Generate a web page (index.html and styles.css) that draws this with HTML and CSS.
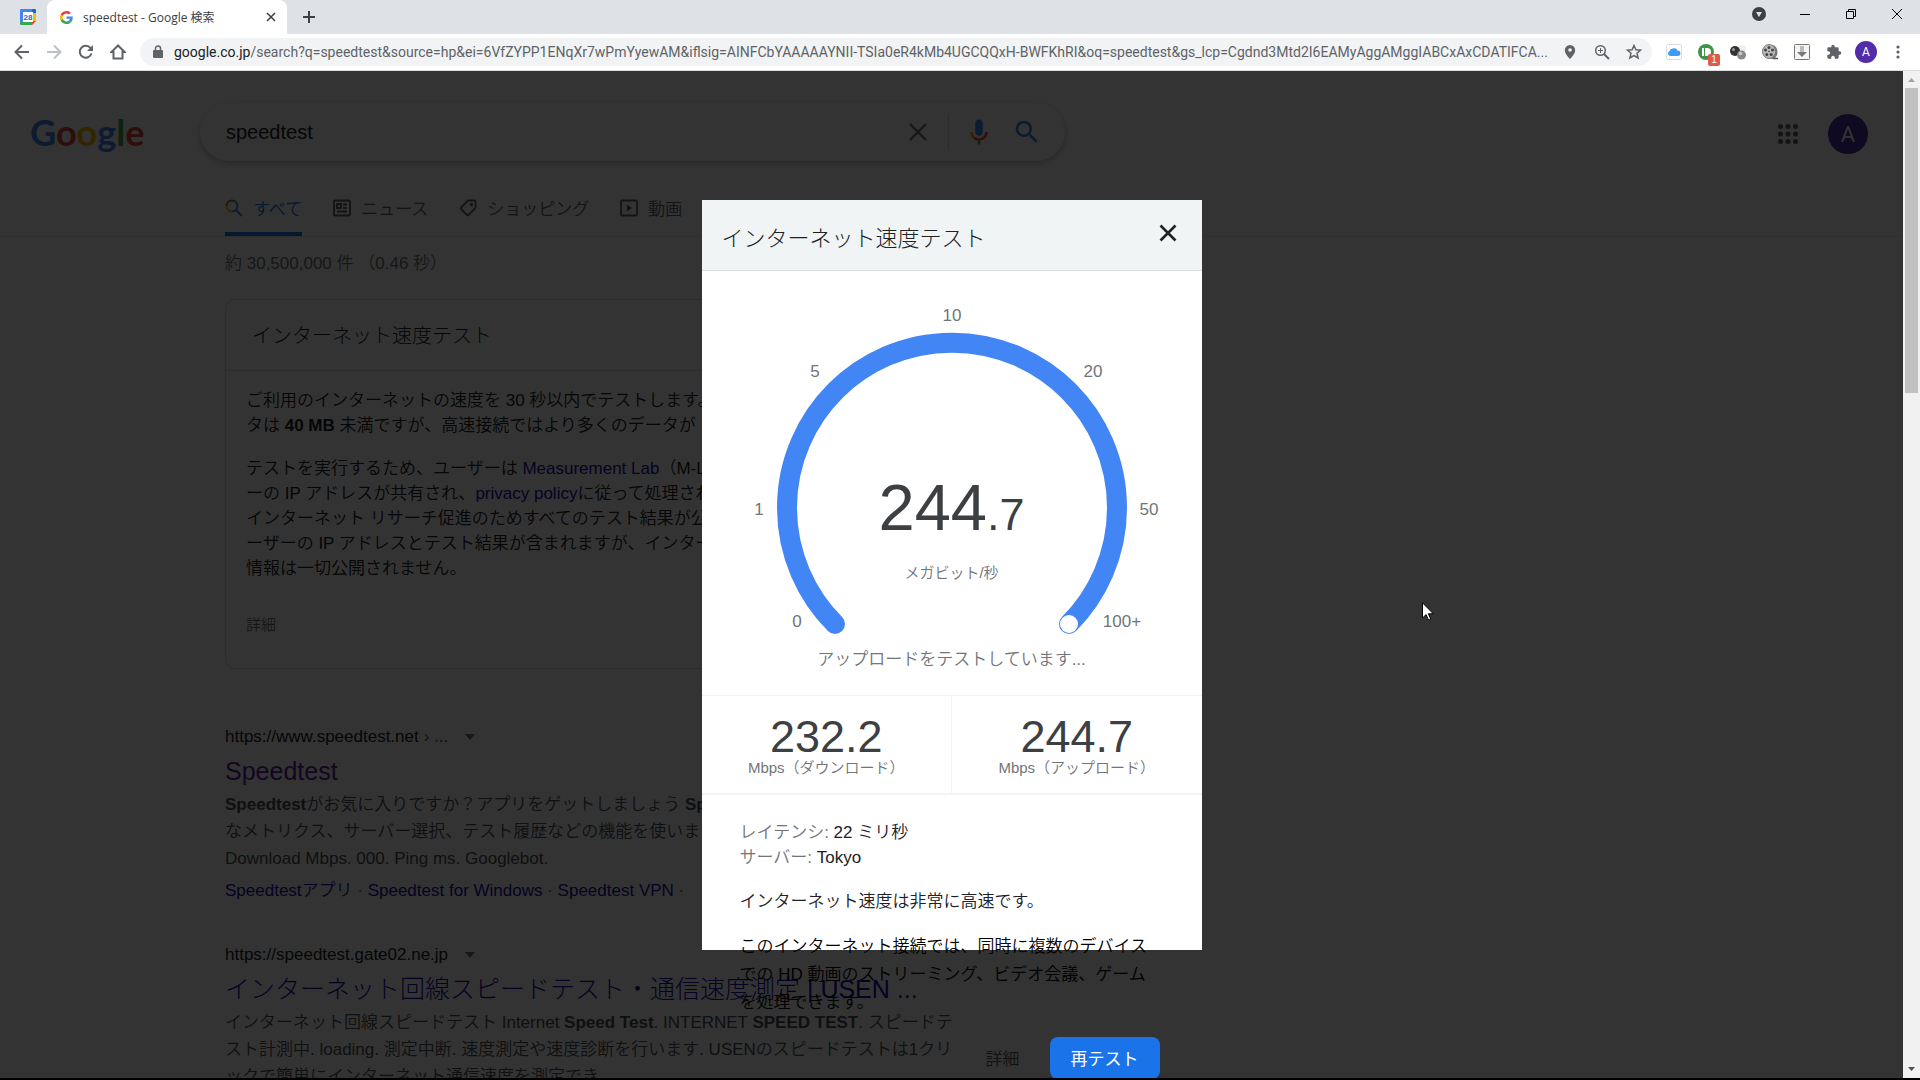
FILE: index.html
```html
<!DOCTYPE html>
<html lang="ja">
<head>
  <meta charset="UTF-8" />
  <meta name="viewport" content="width=device-width, initial-scale=1.0" />
  <title>speedtest - Google 検索</title>
  <link rel="stylesheet" href="styles.css">
</head>
<body>
  <div class="tabstrip">
    <button class="pinned-tab" aria-label="カレンダー">
      <svg width="16" height="16" viewBox="0 0 16 16">
        <path d="M0 1a1 1 0 0 1 1-1h11v4H4v8H0z" fill="#4285f4"/>
        <path d="M12 0h3a1 1 0 0 1 1 1v3h-4z" fill="#1967d2"/>
        <path d="M12 4h4v8h-4z" fill="#fbbc04"/>
        <path d="M0 12h12v4H1a1 1 0 0 1-1-1z" fill="#34a853"/>
        <path d="M12 12h4l-4 4z" fill="#ea4335"/>
        <path d="M3 3h10v10H3z" fill="#fff"/>
        <text x="8" y="11" text-anchor="middle" class="cal-day">28</text>
      </svg>
    </button>
    <div class="tab">
      <svg width="13" height="13" viewBox="0 0 48 48">
        <path fill="#ea4335" d="M24 9.500c3.500 0 6.700 1.200 9.200 3.600l6.900-6.900C35.900 2.400 30.500 0 24 0 14.600 0 6.500 5.400 2.600 13.200l8 6.200C12.400 13.700 17.700 9.500 24 9.500z"/>
        <path fill="#4285f4" d="M47 24.600c0-1.600-.2-3.100-.4-4.600H24v9h12.900c-.6 3-2.200 5.500-4.700 7.200l7.700 6C44.400 38 47 31.800 47 24.600z"/>
        <path fill="#fbbc05" d="M10.500 28.600a14.500 14.500 0 0 1 0-9.200l-8-6.200a24 24 0 0 0 0 21.600z"/>
        <path fill="#34a853" d="M24 48c6.500 0 11.900-2.100 15.900-5.800l-7.700-6c-2.200 1.500-4.900 2.300-8.200 2.300-6.300 0-11.600-4.200-13.500-9.900l-8 6.200C6.500 42.600 14.600 48 24 48z"/>
      </svg>
      <span class="tab-title">speedtest - Google 検索</span>
      <button aria-label="タブを閉じる">
        <svg width="10" height="10" viewBox="0 0 10 10"><path d="M1 1l8 8M9 1l-8 8" stroke="#3c4043" stroke-width="1.500"/></svg>
      </button>
    </div>
    <button class="new-tab" aria-label="新しいタブ">
      <svg width="12" height="12" viewBox="0 0 12 12"><path d="M6 0v12M0 6h12" stroke="#3c4043" stroke-width="2"/></svg>
    </button>
    <div class="window-buttons">
      <button aria-label="タブを検索">
        <svg width="14" height="14" viewBox="0 0 14 14"><circle cx="7" cy="7" r="7" fill="#3c4043"/><path d="M4 5h6L7 10z" fill="#dee1e6"/></svg>
      </button>
      <button aria-label="最小化">
        <svg width="10" height="10" viewBox="0 0 10 10"><path d="M0 5.500h10" stroke="#000"/></svg>
      </button>
      <button aria-label="元に戻す">
        <svg width="10" height="10" viewBox="0 0 10 10"><path d="M.5 2.500h7v7h-7zM2.500 2.500v-2h7v7h-2" fill="none" stroke="#000"/></svg>
      </button>
      <button aria-label="閉じる">
        <svg width="10" height="10" viewBox="0 0 10 10"><path d="M0 0l10 10M10 0L0 10" stroke="#000"/></svg>
      </button>
    </div>
  </div>

  <div class="toolbar">
    <div class="nav-buttons">
      <button aria-label="戻る">
        <svg width="16" height="16" viewBox="0 0 16 16"><path d="M15 8H2M8 1.500L1.500 8 8 14.500" fill="none" stroke="#5f6368" stroke-width="2"/></svg>
      </button>
      <button aria-label="進む">
        <svg width="16" height="16" viewBox="0 0 16 16"><path d="M1 8h13M8 1.500L14.500 8 8 14.500" fill="none" stroke="#bdc1c6" stroke-width="2"/></svg>
      </button>
      <button aria-label="再読み込み">
        <svg width="16" height="16" viewBox="0 0 16 16"><path d="M13.500 9.500A6 6 0 1 1 12.500 4" fill="none" stroke="#5f6368" stroke-width="2"/><path d="M15 1v6H9z" fill="#5f6368"/></svg>
      </button>
      <button aria-label="ホーム">
        <svg width="16" height="16" viewBox="0 0 16 16"><path d="M8 1.500L1.500 8H3.500v6.500h9V8h2z" fill="none" stroke="#5f6368" stroke-width="2"/></svg>
      </button>
    </div>
    <div class="omnibox">
      <svg width="10" height="14" viewBox="0 0 10 14"><rect y="5" width="10" height="8" rx="1" fill="#5f6368"/><path d="M2.500 6V3.500a2.500 2.500 0 0 1 5 0V6" fill="none" stroke="#5f6368" stroke-width="1.500"/></svg>
      <div class="url">
        <label for="url">google.co.jp</label><input id="url" type="text" value="/search?q=speedtest&amp;source=hp&amp;ei=6VfZYPP1ENqXr7wPmYyewAM&amp;iflsig=AINFCbYAAAAAYNII-TSIa0eR4kMb4UGCQQxH-BWFKhRI&amp;oq=speedtest&amp;gs_lcp=Cgdnd3Mtd2I6EAMyAggAMggIABCxAxCDATIFCA...">
      </div>
      <div class="omnibox-actions">
        <button aria-label="位置情報">
          <svg width="16" height="16" viewBox="0 0 16 16"><path d="M8 1a5.200 5.200 0 0 0-5.200 5.200C2.800 10 8 15 8 15s5.200-5 5.200-8.800A5.200 5.200 0 0 0 8 1z" fill="#5f6368"/><circle cx="8" cy="6" r="1.800" fill="#f1f3f4"/></svg>
        </button>
        <button aria-label="ズーム">
          <svg width="16" height="16" viewBox="0 0 16 16"><circle cx="6.500" cy="6.500" r="4.800" fill="none" stroke="#5f6368" stroke-width="1.500"/><path d="M10 10l5 5" stroke="#5f6368" stroke-width="2"/><path d="M6.500 4v5M4 6.500h5" stroke="#5f6368"/></svg>
        </button>
        <button aria-label="ブックマーク">
          <svg width="16" height="16" viewBox="0 0 16 16"><path d="M8 1.500l1.900 4.300 4.600.4-3.500 3.100 1.100 4.700L8 11.600 3.900 14 5 9.300 1.500 6.200l4.600-.4z" fill="none" stroke="#5f6368" stroke-width="1.500"/></svg>
        </button>
      </div>
    </div>
    <div class="extensions">
      <button aria-label="iCloud">
        <svg width="16" height="16" viewBox="0 0 16 16"><rect x=".5" y=".5" width="15" height="15" rx="2" fill="#fff" stroke="#dadce0"/><path d="M4 12a2.600 2.600 0 0 1-.3-5A3 3 0 0 1 6.800 4.500 3.300 3.300 0 0 1 11.400 6.600 2.700 2.700 0 0 1 12 12z" fill="#3b9cf2"/></svg>
      </button>
      <button class="has-badge" aria-label="Pushbullet">
        <svg width="16" height="16" viewBox="0 0 16 16"><circle cx="8" cy="8" r="8" fill="#3f9449"/><path d="M4 4h2v8H4zM7 4h2a4 4 0 0 1 0 8H7z" fill="#fff"/></svg>
        <span class="badge">1</span>
      </button>
      <button aria-label="拡張機能">
        <svg width="16" height="16" viewBox="0 0 16 16">
          <circle cx="12" cy="5" r="4" fill="#eee"/><circle cx="5" cy="7" r="5" fill="#333"/><circle cx="11.500" cy="11" r="4.500" fill="#8a8a8a"/><circle cx="3.500" cy="5.500" r="1.500" fill="#999"/><circle cx="10.500" cy="9.500" r="1.800" fill="#ccc"/>
        </svg>
      </button>
      <button aria-label="拡張機能">
        <svg width="16" height="16" viewBox="0 0 16 16">
          <ellipse cx="10" cy="8" rx="5.500" ry="7" fill="#777"/><ellipse cx="7" cy="7.500" rx="6.500" ry="7" fill="#bbb" stroke="#777"/>
          <g fill="#444"><circle cx="7" cy="3.500" r="1.500"/><circle cx="3.500" cy="6" r="1.500"/><circle cx="10.500" cy="6" r="1.500"/><circle cx="4.800" cy="10.500" r="1.500"/><circle cx="9.200" cy="10.500" r="1.500"/><circle cx="7" cy="7.500" r=".8"/></g>
          <path d="M11 14.500h5" stroke="#555" stroke-width="1.500"/>
        </svg>
      </button>
      <button aria-label="ダウンロード">
        <svg width="16" height="16" viewBox="0 0 16 16"><rect x=".5" y=".5" width="15" height="15" rx="1" fill="#f4f4f4" stroke="#777"/><path d="M6 2h4v6H6z" fill="#bbb"/><path d="M3 8h10l-5 5z" fill="#777"/></svg>
      </button>
      <button aria-label="拡張機能の管理">
        <svg width="16" height="16" viewBox="0 0 24 24"><path d="M20.500 11H19V7a2 2 0 0 0-2-2h-4V3.500a2.500 2.500 0 0 0-5 0V5H4a2 2 0 0 0-2 2v3.800h1.500a2.700 2.700 0 0 1 0 5.400H2V20a2 2 0 0 0 2 2h3.800v-1.500a2.700 2.700 0 0 1 5.400 0V22H17a2 2 0 0 0 2-2v-4h1.500a2.500 2.500 0 0 0 0-5z" fill="#5f6368"/></svg>
      </button>
      <button class="profile" aria-label="プロフィール">A</button>
      <button aria-label="メニュー">
        <svg width="16" height="16" viewBox="0 0 16 16" fill="#5f6368"><circle cx="8" cy="3" r="1.600"/><circle cx="8" cy="8" r="1.600"/><circle cx="8" cy="13" r="1.600"/></svg>
      </button>
    </div>
  </div>

  <div class="viewport">
    <div class="page">
      <header class="header">
        <a class="logo" href="#" aria-label="Google"><span class="blue">G</span><span class="red">o</span><span class="yellow">o</span><span class="blue">g</span><span class="green">l</span><span class="red">e</span></a>
        <form class="search">
          <input type="text" value="speedtest" aria-label="検索">
          <button type="button" aria-label="クリア">
            <svg width="24" height="24" viewBox="0 0 24 24"><path d="M4 4l16 16M20 4L4 20" stroke="#70757a" stroke-width="2.400"/></svg>
          </button>
          <span class="separator"></span>
          <button type="button" aria-label="音声で検索">
            <svg width="30" height="30" viewBox="0 0 24 24">
              <path fill="#4285f4" d="M12 15c1.700 0 3-1.300 3-3V5c0-1.700-1.300-3-3-3S9 3.300 9 5v7c0 1.700 1.300 3 3 3z"/>
              <path fill="#34a853" d="M11 18.900h2V22h-2z"/>
              <path fill="#f4b400" d="M7 12H5c0 1.900.8 3.700 2 4.900l1.400-1.400A4.900 4.900 0 0 1 7 12z"/>
              <path fill="#ea4335" d="M12 16.900c-1.400 0-2.600-.5-3.500-1.400L7.100 16.900A6.900 6.900 0 0 0 12 19c3.900 0 7-3.100 7-7h-2c0 2.800-2.200 4.900-5 4.900z"/>
            </svg>
          </button>
          <button type="submit" aria-label="Google 検索">
            <svg width="30" height="30" viewBox="0 0 24 24"><path fill="#4285f4" d="M15.500 14h-.8l-.3-.3A6.500 6.500 0 1 0 13.700 14.400l.3.300v.8l5 5 1.500-1.500zM9.500 14a4.500 4.500 0 1 1 0-9 4.500 4.500 0 0 1 0 9z"/></svg>
          </button>
        </form>
        <div class="account">
          <button aria-label="Google アプリ">
            <svg width="20" height="20" viewBox="0 0 20 20" fill="#5f6368"><circle cx="2.500" cy="2.500" r="2.500"/><circle cx="10" cy="2.500" r="2.500"/><circle cx="17.500" cy="2.500" r="2.500"/><circle cx="2.500" cy="10" r="2.500"/><circle cx="10" cy="10" r="2.500"/><circle cx="17.500" cy="10" r="2.500"/><circle cx="2.500" cy="17.500" r="2.500"/><circle cx="10" cy="17.500" r="2.500"/><circle cx="17.500" cy="17.500" r="2.500"/></svg>
          </button>
          <button class="avatar" aria-label="Google アカウント">A</button>
        </div>
      </header>

      <nav class="modes">
        <a class="active" href="#">
          <svg width="18" height="18" viewBox="0 0 18 18" fill="none" stroke-width="2">
            <path d="M1.500 7A5.500 5.500 0 0 1 7 1.500" stroke="#ea4335"/><path d="M7 1.500A5.500 5.500 0 0 1 12.500 7" stroke="#34a853"/><path d="M1.500 7A5.500 5.500 0 0 0 7 12.500" stroke="#fbbc04"/><path d="M12.500 7A5.500 5.500 0 0 1 7 12.500M11 11l6 6" stroke="#4285f4"/>
          </svg>
          すべて
        </a>
        <a href="#">
          <svg width="18" height="18" viewBox="0 0 18 18" fill="none" stroke="#5f6368" stroke-width="1.800"><rect x="1" y="1.500" width="16" height="15" rx="1"/><path d="M4 5h4v4H4zM10 5.500h4M10 9h4M4 12.500h10"/></svg>
          ニュース
        </a>
        <a href="#">
          <svg width="18" height="18" viewBox="0 0 18 18" fill="none" stroke="#5f6368" stroke-width="1.800"><path d="M9 1.500h6.500a1 1 0 0 1 1 1V9L9.500 16a1 1 0 0 1-1.400 0L2 10a1 1 0 0 1 0-1.500z"/><circle cx="12.500" cy="5.500" r=".8"/></svg>
          ショッピング
        </a>
        <a href="#">
          <svg width="18" height="18" viewBox="0 0 18 18"><rect x="1" y="1.500" width="16" height="15" rx="1" fill="none" stroke="#5f6368" stroke-width="1.800"/><path d="M7 5.500l5 3.500-5 3.500z" fill="#5f6368"/></svg>
          動画
        </a>
      </nav>

      <main class="results">
        <p class="stats">約 30,500,000 件 （0.46 秒）</p>

        <section class="card">
          <h2>インターネット速度テスト</h2>
          <div class="card-body">
            <p>ご利用のインターネットの速度を 30 秒以内でテストします。<br>タは <b>40 MB</b> 未満ですが、高速接続ではより多くのデータが</p>
            <p>テストを実行するため、ユーザーは <a href="#">Measurement Lab</a>（M-Lab）<br>ーの IP アドレスが共有され、<a href="#">privacy policy</a>に従って処理され<br>インターネット リサーチ促進のためすべてのテスト結果が公<br>ーザーの IP アドレスとテスト結果が含まれますが、インター<br>情報は一切公開されません。</p>
            <a class="more" href="#">詳細</a>
          </div>
        </section>

        <article class="result">
          <p class="cite">https://www.speedtest.net <span>› ...</span><i class="caret"></i></p>
          <h3><a class="visited" href="#">Speedtest</a></h3>
          <p class="snippet"><b>Speedtest</b>がお気に入りですか？アプリをゲットしましょう <b>Speedtest</b><br>なメトリクス、サーバー選択、テスト履歴などの機能を使います。<br>Download Mbps. 000. Ping ms. Googlebot.</p>
          <p class="sitelinks"><a href="#">Speedtestアプリ</a> · <a href="#">Speedtest for Windows</a> · <a href="#">Speedtest VPN</a> ·</p>
        </article>

        <article class="result">
          <p class="cite">https://speedtest.gate02.ne.jp<i class="caret"></i></p>
          <h3><a href="#">インターネット回線スピードテスト・通信速度測定 | USEN ...</a></h3>
          <p class="snippet">インターネット回線スピードテスト Internet <b>Speed Test</b>. INTERNET <b>SPEED TEST</b>. スピードテ<br>スト計測中. loading. 測定中断. 速度測定や速度診断を行います. USENのスピードテストは1クリ<br>ックで簡単にインターネット通信速度を測定でき</p>
        </article>
      </main>

      <div class="overlay">
        <div class="dialog" role="dialog" aria-labelledby="dialog-title">
          <div class="dialog-header">
            <h2 id="dialog-title">インターネット速度テスト</h2>
            <button aria-label="閉じる">
              <svg width="18" height="18" viewBox="0 0 18 18"><path d="M1.500 1.500l15 15M16.500 1.500l-15 15" stroke="#202124" stroke-width="2.600"/></svg>
            </button>
          </div>

          <div class="gauge">
            <svg width="500" height="364" viewBox="0 0 500 364">
              <path d="M133 353A165 165 0 1 1 367 353" fill="none" stroke="#4285f4" stroke-width="20" stroke-linecap="round"/>
              <circle cx="367" cy="353" r="9" fill="#fff"/>
              <g class="ticks">
                <text x="95" y="356">0</text>
                <text x="57" y="244">1</text>
                <text x="113" y="106">5</text>
                <text x="250" y="50">10</text>
                <text x="391" y="106">20</text>
                <text x="447" y="244">50</text>
                <text x="420" y="356">100+</text>
              </g>
            </svg>
            <div class="reading">
              <div class="speed">244<small>.7</small></div>
              <div class="unit">メガビット/秒</div>
            </div>
            <p class="status">アップロードをテストしています...</p>
          </div>

          <div class="totals">
            <div><strong>232.2</strong><span>Mbps（ダウンロード）</span></div>
            <div><strong>244.7</strong><span>Mbps（アップロード）</span></div>
          </div>

          <div class="details">
            <p class="facts"><span>レイテンシ:</span> 22 ミリ秒<br><span>サーバー:</span> Tokyo</p>
            <p class="verdict">インターネット速度は非常に高速です。</p>
            <p class="advice">このインターネット接続では、同時に複数のデバイスでの HD 動画のストリーミング、ビデオ会議、ゲームを処理できます。</p>
            <div class="dialog-actions">
              <a href="#">詳細</a>
              <button>再テスト</button>
            </div>
          </div>
        </div>
      </div>
    </div>

    <div class="scrollbar">
      <svg width="17" height="17" viewBox="0 0 17 17"><path d="M5 11h7L8.500 7z" fill="#a3a3a3"/></svg>
      <div class="thumb"></div>
      <svg width="17" height="17" viewBox="0 0 17 17"><path d="M5 6h7L8.500 10z" fill="#505050"/></svg>
    </div>
  </div>

  <svg class="cursor" width="12" height="19" viewBox="0 0 12 19"><path d="M.5.8v15.200l3.600-3.400 2.500 5.600 2.200-1-2.500-5.400h5z" fill="#fff" stroke="#000"/></svg>
</body>
</html>
```
FILE: styles.css
```css
* {
  box-sizing: border-box;
}
body {
  margin: 0;
  height: 100vh;
  padding-bottom: 2px;
  display: flex;
  flex-direction: column;
  overflow: hidden;
  background: #000;
  color: #202124;
  font-family: "Liberation Sans", "Noto Sans CJK JP", sans-serif;
  font-size: 17px;
  font-weight: 350;
}
h2, h3, p {
  margin: 0;
}
p {
  font-weight: 350;
}
h2, h3 {
  font-weight: 300;
}
b {
  font-weight: 700;
}
a {
  color: #1a0dab;
  text-decoration: none;
}
svg {
  display: block;
  flex: none;
}
button {
  display: flex;
  align-items: center;
  justify-content: center;
  flex: none;
  padding: 0;
  border: none;
  background: none;
  font-family: inherit;
}
input {
  min-width: 0;
  padding: 0;
  border: none;
  outline: none;
  background: none;
  font: inherit;
  color: inherit;
}

/* browser window */
.tabstrip {
  display: flex;
  flex: none;
  height: 34px;
  background: #dee1e6;
}
.pinned-tab {
  width: 47px;
  padding-left: 9px;
}
.cal-day {
  font-size: 8px;
  font-weight: 700;
  fill: #1967d2;
}
.tab {
  width: 240px;
  display: flex;
  align-items: center;
  gap: 10px;
  padding: 0 11px 0 13px;
  border-radius: 8px 8px 0 0;
  background: #fff;
  color: #3c4043;
  font-family: "Open Sans", "Noto Sans CJK JP", sans-serif;
  font-size: 12px;
  font-weight: 400;
}
.tab-title {
  flex: 1;
  white-space: nowrap;
}
.new-tab {
  width: 44px;
}
.window-buttons {
  display: flex;
  margin-left: auto;
  height: 28px;
}
.window-buttons button {
  width: 46px;
}
.toolbar {
  display: flex;
  align-items: center;
  flex: none;
  height: 37px;
  padding: 0 14px;
  background: #fff;
  border-bottom: 1px solid #dadce0;
}
.nav-buttons {
  display: flex;
  gap: 16px;
  margin-right: 14px;
}
.omnibox {
  flex: 1;
  min-width: 0;
  height: 28px;
  display: flex;
  align-items: center;
  gap: 11px;
  padding: 0 10px 0 13px;
  border-radius: 14px;
  background: #f1f3f4;
}
.url {
  flex: 1;
  min-width: 0;
  display: flex;
  font-family: Roboto, sans-serif;
  font-size: 14px;
  font-weight: 400;
  color: #202124;
}
.url input {
  flex: 1;
  color: #5f6368;
}
.omnibox-actions {
  display: flex;
  gap: 16px;
}
.extensions {
  display: flex;
  align-items: center;
  gap: 16px;
  margin-left: 14px;
}
.has-badge {
  position: relative;
}
.badge {
  position: absolute;
  left: 10px;
  top: 10px;
  width: 12px;
  height: 12px;
  border-radius: 2px;
  background: #e0594b;
  color: #fff;
  font-size: 10px;
  line-height: 12px;
}
.profile {
  width: 22px;
  height: 22px;
  margin: 0 -3px;
  border-radius: 50%;
  background: #512da8;
  color: #fff;
  font-family: Roboto, sans-serif;
  font-size: 12px;
}
.viewport {
  flex: 1;
  min-height: 0;
  display: flex;
}
.scrollbar {
  width: 17px;
  display: flex;
  flex-direction: column;
  background: #f1f1f1;
}
.thumb {
  height: 305px;
  margin: 0 2px auto;
  background: #c1c1c1;
}

/* results page */
.page {
  flex: 1;
  position: relative;
  overflow: hidden;
  background: #fff;
}
.header {
  display: flex;
  align-items: center;
  padding: 32px 35px 0 30px;
}
.logo {
  width: 170px;
  font-family: Lato, sans-serif;
  font-size: 36px;
  font-weight: 700;
  line-height: 48px;
}
.blue { color: #4285f4; }
.red { color: #ea4335; }
.yellow { color: #fbbc05; }
.green { color: #34a853; }
.search {
  width: 865px;
  height: 58px;
  display: flex;
  align-items: center;
  padding: 0 14px 0 26px;
  border-radius: 29px;
  box-shadow: 0 2px 6px rgba(32, 33, 36, 0.28);
}
.search input {
  flex: 1;
  color: #202124;
  font-size: 20px;
}
.search button {
  width: 48px;
}
.separator {
  width: 1px;
  height: 36px;
  margin: 0 6px;
  background: #dadce0;
}
.account {
  display: flex;
  align-items: center;
  gap: 30px;
  margin-left: auto;
  padding-top: 4px;
}
.avatar {
  width: 40px;
  height: 40px;
  border-radius: 50%;
  background: #512da8;
  color: #fff;
  font-family: Roboto, sans-serif;
  font-size: 22px;
}
.modes {
  display: flex;
  gap: 31px;
  padding: 20px 0 0 225px;
  border-bottom: 1px solid #ebebeb;
}
.modes a {
  display: flex;
  align-items: center;
  gap: 10px;
  height: 55px;
  padding-top: 2px;
  border-bottom: 4px solid transparent;
  color: #5f6368;
}
.modes .active {
  color: #1a73e8;
  border-color: #1a73e8;
}
.results {
  padding-left: 225px;
  white-space: nowrap;
}
.stats {
  padding-top: 14px;
  line-height: 25px;
  color: #70757a;
}
.card {
  width: 815px;
  margin-top: 23px;
  border: 1px solid #dadce0;
  border-radius: 10px;
}
.card h2 {
  padding: 2px 26px 0;
  border-bottom: 1px solid #dadce0;
  font-size: 20px;
  line-height: 68px;
}
.card-body {
  padding: 17px 20px 31px;
  line-height: 25px;
}
.card-body p {
  margin-bottom: 18px;
}
.more {
  display: block;
  padding-top: 13px;
  color: #70757a;
  font-size: 15px;
}
.result {
  margin-bottom: 38px;
}
.card + .result {
  margin-top: 55px;
}
.cite {
  display: flex;
  align-items: center;
  gap: 5px;
  line-height: 25px;
}
.cite span {
  color: #5f6368;
}
.caret {
  margin-left: 12px;
  border: 5px solid transparent;
  border-top: 6px solid #70757a;
  border-bottom: 0;
}
.result h3 {
  padding-top: 2px;
  font-size: 25px;
  line-height: 40px;
}
.visited {
  color: #681da8;
}
.snippet {
  color: #4d5156;
  line-height: 27px;
}
.sitelinks {
  padding-top: 5px;
  color: #70757a;
  line-height: 27px;
}

/* speed test dialog */
.overlay {
  position: absolute;
  inset: 0;
  display: flex;
  align-items: center;
  justify-content: center;
  background: rgba(0, 0, 0, 0.8);
}
.dialog {
  width: 500px;
  height: 750px;
  background: #fff;
}
.dialog-header {
  display: flex;
  justify-content: space-between;
  height: 71px;
  padding: 24px 25px 0 20px;
  background: #f0f4f5;
  border-bottom: 1px solid #dadce0;
}
.dialog-header h2 {
  font-size: 22px;
  line-height: 30px;
}
.dialog-header button {
  height: 18px;
}
.gauge {
  position: relative;
  padding-bottom: 23px;
  border-bottom: 1px solid #f1f3f4;
  text-align: center;
}
.ticks {
  font-size: 17px;
  fill: #70757a;
  text-anchor: middle;
}
.reading {
  position: absolute;
  top: 199px;
  left: 0;
  right: 0;
}
.speed {
  color: #3c4043;
  font-size: 65px;
  line-height: 75px;
}
.speed small {
  font-size: 45px;
}
.unit {
  margin-top: 8px;
  color: #70757a;
  font-size: 15px;
  line-height: 25px;
}
.status {
  padding-top: 12px;
  color: #70757a;
  line-height: 25px;
}
.totals {
  display: flex;
  border-bottom: 2px solid #f1f3f4;
}
.totals div {
  flex: 1;
  display: flex;
  flex-direction: column;
  align-items: center;
  padding: 20px 0 15px;
}
.totals div + div {
  border-left: 1px solid #f1f3f4;
}
.totals strong {
  color: #3c4043;
  font-size: 45px;
  font-weight: 400;
  line-height: 42px;
}
.totals span {
  color: #70757a;
  font-size: 15px;
  line-height: 20px;
}
.details {
  padding: 25px 42px 0 38px;
}
.facts {
  line-height: 25px;
}
.facts span {
  color: #70757a;
}
.verdict {
  padding-top: 19px;
  line-height: 25px;
}
.advice {
  padding-top: 19px;
  color: #000;
  line-height: 28px;
}
.dialog-actions {
  display: flex;
  align-items: center;
  justify-content: flex-end;
  gap: 30px;
  margin-top: 20px;
}
.dialog-actions a {
  color: #111;
}
.dialog-actions button {
  width: 110px;
  height: 42px;
  border-radius: 8px;
  background: #1a73e8;
  color: #fff;
  font-size: 17px;
  font-weight: 400;
}
.cursor {
  position: absolute;
  left: 1422px;
  top: 602px;
}
```
